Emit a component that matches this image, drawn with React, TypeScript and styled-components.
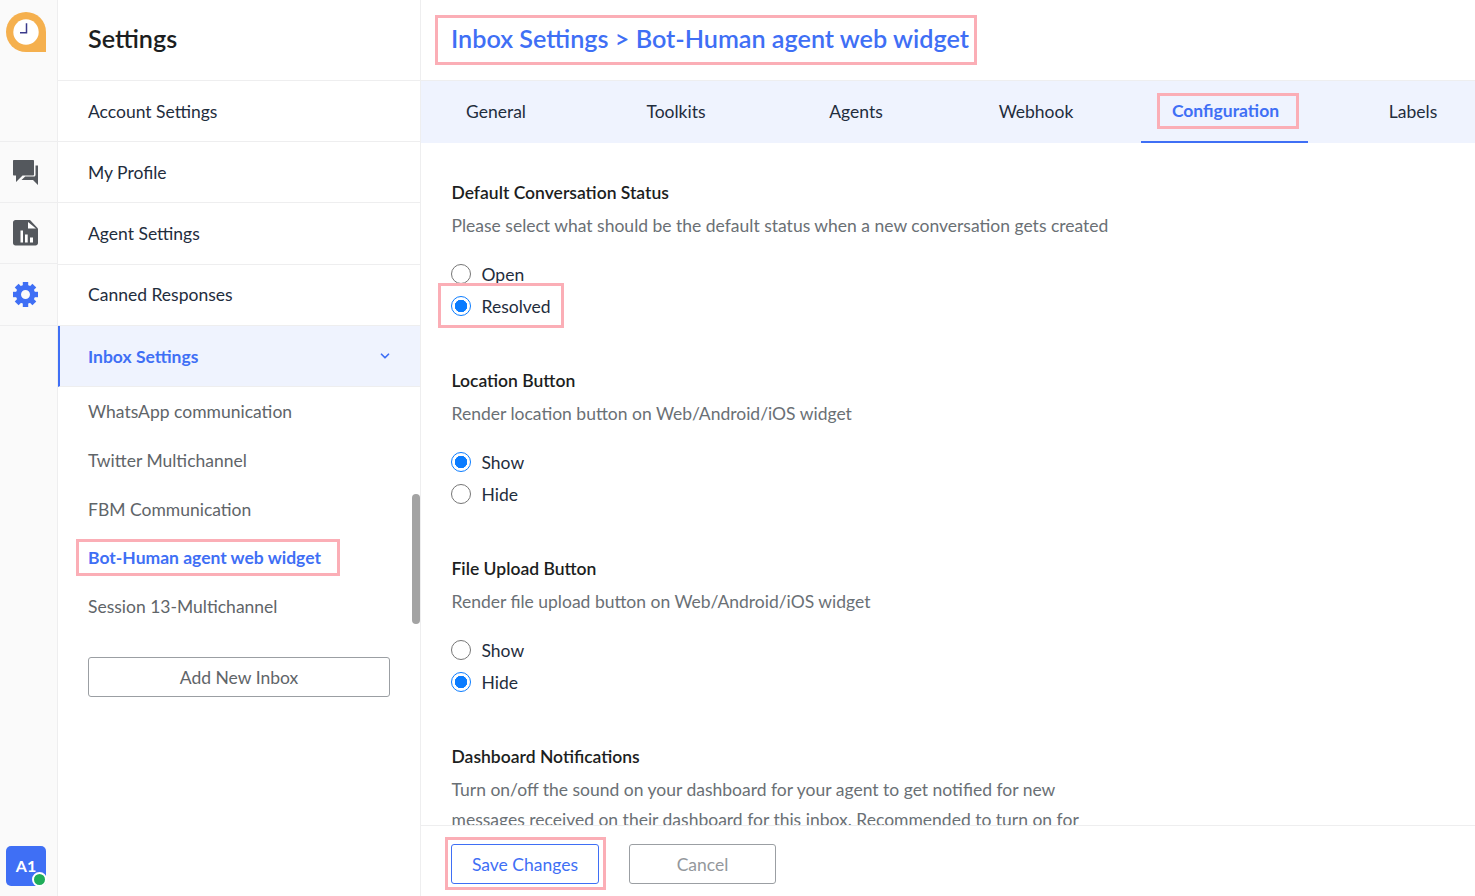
import React from "react";
import styled, { createGlobalStyle, css } from "styled-components";
import { ChevronDown } from "lucide-react";

type Section = {
  title: string;
  description: string;
  options?: { label: string; checked: boolean; marked?: boolean }[];
};

const navItems = ["Account Settings", "My Profile", "Agent Settings", "Canned Responses"];
const inboxes = [
  "WhatsApp communication",
  "Twitter Multichannel",
  "FBM Communication",
  "Bot-Human agent web widget",
  "Session 13-Multichannel",
];
const tabs = ["General", "Toolkits", "Agents", "Webhook", "Configuration", "Labels"];
const gearTeeth = [0, 45, 90, 135, 180, 225, 270, 315];
const sections: Section[] = [
  {
    title: "Default Conversation Status",
    description: "Please select what should be the default status when a new conversation gets created",
    options: [
      { label: "Open", checked: false },
      { label: "Resolved", checked: true, marked: true },
    ],
  },
  {
    title: "Location Button",
    description: "Render location button on Web/Android/iOS widget",
    options: [
      { label: "Show", checked: true },
      { label: "Hide", checked: false },
    ],
  },
  {
    title: "File Upload Button",
    description: "Render file upload button on Web/Android/iOS widget",
    options: [
      { label: "Show", checked: false },
      { label: "Hide", checked: true },
    ],
  },
  {
    title: "Dashboard Notifications",
    description:
      "Turn on/off the sound on your dashboard for your agent to get notified for new messages received on their dashboard for this inbox. Recommended to turn on for",
  },
];

const App = () => {
  return (
    <Page>
      <GlobalStyle />
      <Rail>
        <LogoSlot>
          <svg width="40" height="40" viewBox="0 0 40 40">
            <path d="M20 0a20 20 0 0 0 0 40h20V20A20 20 0 0 0 20 0z" fill="#f5b04e" />
            <circle cx="20" cy="20" r="12.700" fill="#fff" />
            <path d="M20.500 11.300V20.700H14" fill="none" stroke="#3a3a8c" strokeWidth="1.500" />
          </svg>
        </LogoSlot>
        <RailItem>
          <svg width="25" height="25" viewBox="0 0 25 25">
            <path
              d="M0 1C0 .4.4 0 1 0h19c.6 0 1 .4 1 1v13.500c0 .6-.4 1-1 1H9.500L3 22v-6.500H1c-.6 0-1-.4-1-1z"
              fill="#54585d"
            />
            <path d="M22.500 5.500H25V25l-5-5H8.500l3.700-3.500H21c.8 0 1.500-.7 1.500-1.500z" fill="#54585d" />
          </svg>
        </RailItem>
        <RailItem>
          <svg width="25" height="26" viewBox="0 0 25 26">
            <path
              d="M2.500 0H17l8 8.500V23c0 1.400-1.100 2.500-2.500 2.500h-20C1.100 25.500 0 24.400 0 23V2.500C0 1.100 1.100 0 2.500 0z"
              fill="#54585d"
            />
            <path d="M15 2 23 8.500H15z" fill="#fff" />
            <path d="M7.500 10.500H10v12H7.500zM12 14.500h2.700v8H12zM17 17.500h3v5h-3z" fill="#fff" />
          </svg>
        </RailItem>
        <RailItem>
          <GearIcon viewBox="0 0 24 24">
            <circle cx="12" cy="12" r="6.800" fill="none" stroke="currentColor" strokeWidth="5" />
            {gearTeeth.map((angle) => (
              <rect
                key={angle}
                x="9.400"
                y="0"
                width="5.200"
                height="4"
                fill="currentColor"
                transform={`rotate(${angle} 12 12)`}
              />
            ))}
          </GearIcon>
        </RailItem>
        <RailSpacer />
        <Avatar>
          A1
          <Presence />
        </Avatar>
      </Rail>

      <Panel>
        <PanelHeader>Settings</PanelHeader>
        {navItems.map((item) => (
          <NavRow key={item}>{item}</NavRow>
        ))}
        <NavRow $active>
          Inbox Settings
          <ChevronDown size={14} strokeWidth={3} />
        </NavRow>
        <SubList>
          {inboxes.map((name) => (
            <SubItem key={name} $active={name.startsWith("Bot")}>
              {name.startsWith("Bot") ? <SubMark>{name}</SubMark> : name}
            </SubItem>
          ))}
        </SubList>
        <AddButton>Add New Inbox</AddButton>
        <ScrollThumb />
      </Panel>

      <Main>
        <MainHeader>
          <Crumb>Inbox Settings &gt; Bot-Human agent web widget</Crumb>
        </MainHeader>
        <TabBar>
          {tabs.map((tab) => (
            <Tab key={tab} $active={tab === "Configuration"}>
              {tab === "Configuration" ? <TabMark>{tab}</TabMark> : tab}
            </Tab>
          ))}
        </TabBar>
        <Content>
          {sections.map((section) => (
            <Block key={section.title}>
              <BlockTitle>{section.title}</BlockTitle>
              <BlockText>{section.description}</BlockText>
              {section.options && (
                <Options>
                  {section.options.map((option) => (
                    <Option key={option.label} $marked={option.marked}>
                      <Radio type="radio" name={section.title} defaultChecked={option.checked} />
                      {option.label}
                    </Option>
                  ))}
                </Options>
              )}
            </Block>
          ))}
        </Content>
        <Footer>
          <SaveButton>Save Changes</SaveButton>
          <CancelButton>Cancel</CancelButton>
        </Footer>
      </Main>
    </Page>
  );
};

export default App;

const GlobalStyle = createGlobalStyle`
  html, body {
    margin: 0;
    height: 100%;
    overflow: hidden;
    background: #fff;
  }
  #root {
    height: 100%;
  }
  * {
    box-sizing: border-box;
  }
`;

// the pink annotation frame drawn over a part of the page
const markFrame = (top: number, right: number, bottom: number, left: number) => css`
  position: relative;
  &::after {
    content: "";
    position: absolute;
    top: -${top}px;
    right: -${right}px;
    bottom: -${bottom}px;
    left: -${left}px;
    border: 3px solid #fbaeb6;
    pointer-events: none;
  }
`;

const Page = styled.div`
  display: flex;
  height: 896px;
  font-family: Lato, "Liberation Sans", sans-serif;
  font-size: 17.500px;
  color: #1f2d3d;
`;

const Rail = styled.aside`
  width: 58px;
  flex: none;
  display: flex;
  flex-direction: column;
  background: #fafafa;
  border-right: 1px solid #eeeeef;
`;
const LogoSlot = styled.div`
  height: 142px;
  padding: 12px 0 0 6px;
  border-bottom: 1px solid #eeeeef;
`;
const RailItem = styled.div`
  height: 61.200px;
  display: flex;
  align-items: center;
  justify-content: center;
  padding-right: 7px;
  border-bottom: 1px solid #eeeeef;
`;
const GearIcon = styled.svg`
  width: 25px;
  height: 25px;
  color: #3f6ff5;
`;
const RailSpacer = styled.div`
  flex: 1;
`;
const Avatar = styled.div`
  position: relative;
  width: 40px;
  height: 40px;
  margin: 0 0 10px 6px;
  padding-bottom: 2px;
  border-radius: 5px;
  background: #3f6ff5;
  color: #fff;
  font-size: 16px;
  font-weight: 700;
  display: flex;
  align-items: center;
  justify-content: center;
`;
const Presence = styled.span`
  position: absolute;
  right: -1px;
  bottom: -1px;
  width: 15px;
  height: 15px;
  border: 2.500px solid #fff;
  border-radius: 50%;
  background: #1fad5a;
`;

const Panel = styled.nav`
  position: relative;
  width: 363px;
  flex: none;
  border-right: 1px solid #eeeeef;
  display: flex;
  flex-direction: column;
`;
const PanelHeader = styled.h2`
  height: 81px;
  margin: 0;
  padding: 0 30px 5px;
  display: flex;
  align-items: center;
  font-size: 25.200px;
  font-weight: 600;
  color: #1c1e21;
  border-bottom: 1px solid #eeeeef;
  flex: none;
`;
const NavRow = styled.div<{ $active?: boolean }>`
  height: 61.200px;
  flex: none;
  display: flex;
  align-items: center;
  justify-content: space-between;
  padding: 0.400px 28px 0 ${(p) => (p.$active ? "28px" : "30px")};
  border-bottom: 1px solid #eeeeef;
  ${(p) =>
    p.$active &&
    css`
      background: #eff3fe;
      color: #3f6ff5;
      font-weight: 700;
      border-left: 2px solid #3f6ff5;
    `}
`;
const SubList = styled.div`
  padding: 0.250px 0 0 30px;
  color: #5f6569;
`;
const SubItem = styled.div<{ $active?: boolean }>`
  height: 48.750px;
  display: flex;
  align-items: center;
  color: ${(p) => (p.$active ? "#3f6ff5" : "inherit")};
  font-weight: ${(p) => (p.$active ? 700 : 400)};
`;
const SubMark = styled.span`
  ${markFrame(9, 19, 8, 12)}
  line-height: 20px;
`;
const AddButton = styled.button`
  width: 302px;
  height: 40px;
  margin: 26px 0 0 30px;
  padding-top: 2px;
  background: #fff;
  border: 1px solid #9b9fa3;
  border-radius: 3px;
  font: inherit;
  color: #5f6569;
`;
const ScrollThumb = styled.div`
  position: absolute;
  right: 0;
  top: 494px;
  width: 8px;
  height: 130px;
  border-radius: 4px;
  background: #a3a3a3;
`;

const Main = styled.main`
  flex: 1;
  min-width: 0;
  display: flex;
  flex-direction: column;
`;
const MainHeader = styled.header`
  height: 81px;
  flex: none;
  padding: 0 0 5px 30px;
  display: flex;
  align-items: center;
  border-bottom: 1px solid #eeeeef;
`;
const Crumb = styled.h1`
  ${markFrame(6.500, 8, 11.500, 16)}
  margin: 0;
  font-size: 25.200px;
  font-weight: 600;
  line-height: 32px;
  color: #3f6ff5;
  white-space: nowrap;
`;
const TabBar = styled.div`
  height: 62px;
  flex: none;
  display: flex;
  background: #eff3fe;
  overflow: hidden;
`;
const Tab = styled.div<{ $active?: boolean }>`
  flex: none;
  width: ${(p) => (p.$active ? "167px" : "180px")};
  margin-left: ${(p) => (p.$active ? "15px" : "0")};
  display: flex;
  align-items: center;
  justify-content: center;
  color: ${(p) => (p.$active ? "#3f6ff5" : "inherit")};
  font-weight: ${(p) => (p.$active ? 700 : 400)};
  border-bottom: 2px solid ${(p) => (p.$active ? "#3f6ff5" : "transparent")};
  &:first-child {
    margin-left: -15px;
  }
  &:last-child {
    margin-left: 15px;
  }
`;
const TabMark = styled.span`
  ${markFrame(8, 20, 8, 15)}
  left: 1px;
  line-height: 20px;
`;
const Content = styled.div`
  flex: 1;
  min-height: 0;
  overflow: hidden;
  padding: 38px 30px 0 30.500px;
`;
const Block = styled.section`
  max-width: 670px;
  margin-bottom: 51px;
`;
const BlockTitle = styled.h3`
  margin: 0;
  font-size: 17.500px;
  line-height: 24px;
  font-weight: 600;
  color: #1c1e21;
`;
const BlockText = styled.p`
  margin: 6px 0 0;
  line-height: 30px;
  color: #6a7075;
`;
const Options = styled.div`
  margin-top: 21px;
  display: flex;
  flex-direction: column;
  gap: 8px;
  align-items: flex-start;
`;
const Option = styled.label<{ $marked?: boolean }>`
  display: flex;
  align-items: center;
  gap: 10.500px;
  height: 24px;
  ${(p) => p.$marked && markFrame(11, 13.500, 10, 14)}
`;
const Radio = styled.input`
  appearance: none;
  width: 20px;
  height: 20px;
  margin: 0 0 0 -0.500px;
  border: 1.500px solid #767676;
  border-radius: 50%;
  background: #fff;
  &:checked {
    border-color: #0a7cff;
    background: radial-gradient(circle, #0a7cff 0 6px, #fff 6.500px);
  }
`;
const Footer = styled.footer`
  height: 71px;
  flex: none;
  display: flex;
  align-items: center;
  gap: 30px;
  padding: 6px 0 0 30px;
  border-top: 1px solid #eeeeef;
  background: #fff;
`;
const SaveButton = styled.button`
  ${markFrame(8, 8, 7, 7)}
  width: 148px;
  height: 40px;
  background: #fff;
  border: 1px solid #3f6ff5;
  border-radius: 3px;
  font: inherit;
  color: #3f6ff5;
`;
const CancelButton = styled.button`
  width: 147px;
  height: 40px;
  background: #fff;
  border: 1px solid #9b9fa3;
  border-radius: 3px;
  font: inherit;
  color: #94989c;
`;
